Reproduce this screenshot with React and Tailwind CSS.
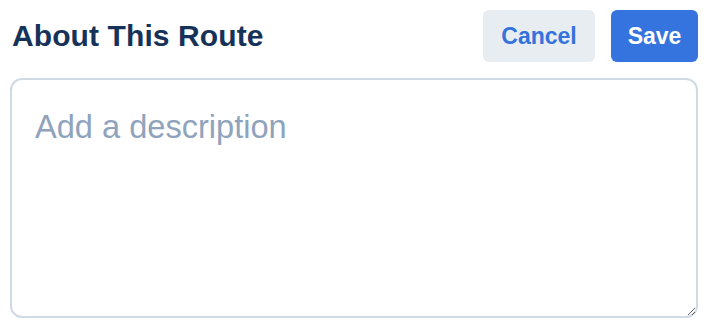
export default function App() {
  return (
    <div
      className="w-[710px] h-[336px] bg-white pl-[10px] pr-[12px] pt-[10px] flex flex-col gap-[16px]"
      style={{ fontFamily: '"Liberation Sans", Arial, sans-serif' }}
    >
      <div className="flex items-center justify-between h-[52px]">
        <h2 className="pl-[2px] text-[30px] font-bold text-[#163259] leading-[1.15] tracking-[0.1px]">
          About This Route
        </h2>
        <div className="flex gap-[16px]">
          <button className="w-[112px] h-[52px] rounded-[6px] bg-[#e8edf2] text-[#3473dc] text-[23px] font-bold flex items-center justify-center">
            Cancel
          </button>
          <button className="w-[87px] h-[52px] rounded-[6px] bg-[#3573df] text-white text-[23px] font-bold flex items-center justify-center">
            Save
          </button>
        </div>
      </div>
      <textarea
        placeholder="Add a description"
        className="w-[688px] h-[240px] border-2 border-[#cfdae5] rounded-[12px] pl-[23px] pt-[23px] pr-[20px] text-[32.6px] leading-[48px] text-[#1a2b44] placeholder:text-[#8fa3bd] outline-none"
        style={{ fontFamily: '"Liberation Sans", Arial, sans-serif' }}
      />
    </div>
  );
}
